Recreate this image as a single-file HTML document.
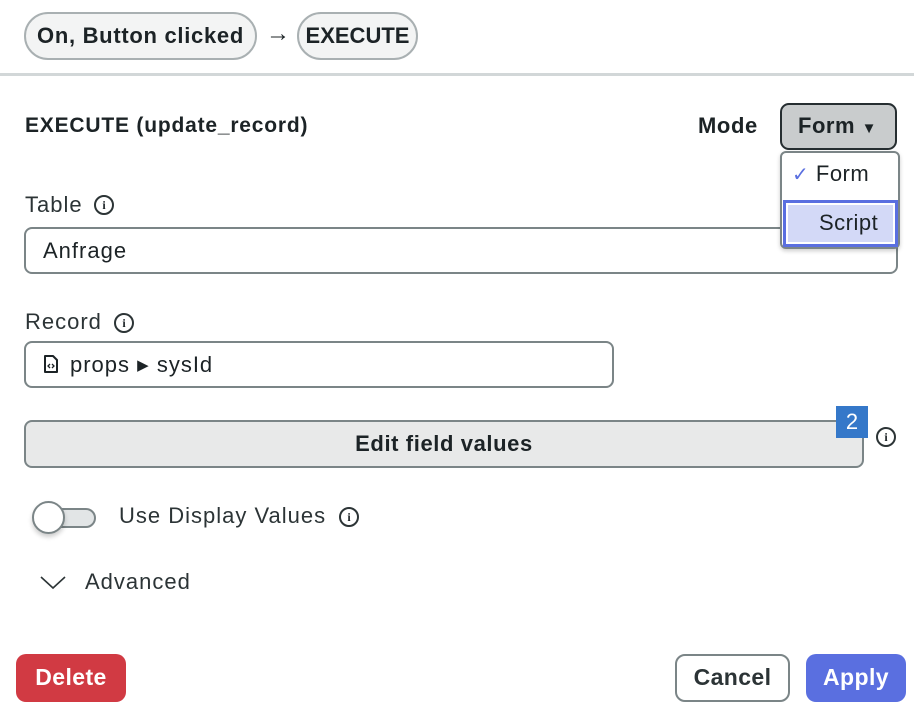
<!DOCTYPE html>
<html><head><style>
*{box-sizing:border-box;margin:0;padding:0}
body{width:914px;height:716px;background:#fff;font-family:"Liberation Sans",sans-serif;color:#1c2326;position:relative;overflow:hidden;letter-spacing:1px}
.a{position:absolute}
.pill{border:2px solid #a9b0b2;border-radius:24px;background:#f3f4f4;height:48px;top:12px;font-size:22px;font-weight:bold;line-height:44px;text-align:center;letter-spacing:0.7px}
.lbl{font-size:22px;color:#2c3436}
.inp{border:2px solid #7b8587;border-radius:8px;background:#fff}
.info{width:20px;height:20px;border:2px solid #2c3436;border-radius:50%;font-size:12px;font-weight:bold;text-align:center;line-height:16px;font-family:"Liberation Serif",serif;letter-spacing:0}
.btn{top:654px;height:48px;border-radius:10px;font-size:23px;font-weight:bold;text-align:center;line-height:46px;letter-spacing:0.4px}
</style></head><body>
<div class="a pill" style="left:24px;width:233px">On, Button clicked</div>
<div class="a" style="left:266px;top:20px;font-size:24px">→</div>
<div class="a pill" style="left:297px;width:121px;letter-spacing:0">EXECUTE</div>
<div class="a" style="left:0;top:73px;width:914px;height:3px;background:#d2d7d8"></div>

<div class="a" style="left:25px;top:114px;font-size:21px;font-weight:bold;letter-spacing:0.8px">EXECUTE (update_record)</div>
<div class="a" style="left:698px;top:113px;font-size:22px;font-weight:bold;letter-spacing:0.6px">Mode</div>
<div class="a" style="left:780px;top:103px;width:117px;height:47px;border:2px solid #262e31;border-radius:9px;background:#c9cccd;font-size:22px;font-weight:bold;line-height:42px;padding-left:16px;letter-spacing:0.5px">Form <span style="font-size:15px">▼</span></div>

<div class="a lbl" style="left:25px;top:192px">Table</div>
<div class="a info" style="left:94px;top:195px">i</div>
<div class="a inp" style="left:24px;top:227px;width:874px;height:47px;font-size:22px;line-height:43px;padding-left:17px">Anfrage</div>

<div class="a" style="left:780px;top:151px;width:120px;height:98px;border:2px solid #7b8587;border-radius:6px;background:#fff;box-shadow:0 2px 4px rgba(0,0,0,.2)">
 <div class="a" style="left:10px;top:8px;font-size:22px;letter-spacing:0.5px"><span style="color:#5a6fe0;font-size:20px">✓</span> Form</div>
 <div class="a" style="left:1px;top:47px;width:115px;height:47px;border:3px solid #5a6fe0;background:#d3d9f7;outline:2px solid #fff;outline-offset:-5px;font-size:22px;line-height:40px;padding-left:33px;letter-spacing:0.5px">Script</div>
</div>

<div class="a lbl" style="left:25px;top:309px">Record</div>
<div class="a info" style="left:114px;top:313px">i</div>
<div class="a inp" style="left:24px;top:341px;width:590px;height:47px;font-size:22px;line-height:43px;padding-left:16px">
 <svg width="18" height="20" viewBox="0 0 18 20" style="vertical-align:-2px;margin-right:10px"><path d="M3 2h8l4 4v12H3z" fill="none" stroke="#1c2326" stroke-width="2" stroke-linejoin="round"/><path d="M8 10l-2 2 2 2M10 10l2 2-2 2" fill="none" stroke="#1c2326" stroke-width="1.3"/></svg>props <span style="font-size:15px;vertical-align:2px">▶</span> sysId</div>

<div class="a" style="left:24px;top:420px;width:840px;height:48px;border:2px solid #7b8587;border-radius:8px;background:#e8e9e9;font-size:22px;font-weight:bold;text-align:center;line-height:43px;letter-spacing:0.6px">Edit field values</div>
<div class="a" style="left:836px;top:406px;width:32px;height:32px;background:#3578c9;color:#fff;font-size:22px;text-align:center;line-height:32px;letter-spacing:0">2</div>
<div class="a info" style="left:876px;top:427px">i</div>

<div class="a" style="left:33px;top:508px;width:63px;height:20px;border:2px solid #7b8587;border-radius:10px;background:#e2e5e6"></div>
<div class="a" style="left:32px;top:501px;width:33px;height:33px;border:2px solid #7b8587;border-radius:50%;background:#fff;box-shadow:0 3px 5px rgba(0,0,0,.2)"></div>
<div class="a lbl" style="left:119px;top:503px">Use Display Values</div>
<div class="a info" style="left:339px;top:507px">i</div>

<svg class="a" style="left:39px;top:574px" width="28" height="16"><path d="M2 3l12 11 12-11" fill="none" stroke="#2c3436" stroke-width="1.6"/></svg>
<div class="a lbl" style="left:85px;top:569px">Advanced</div>

<div class="a btn" style="left:16px;width:110px;background:#d13a43;color:#fff">Delete</div>
<div class="a btn" style="left:675px;width:115px;border:2px solid #7b8587;background:#fff;color:#2c3436;line-height:43px">Cancel</div>
<div class="a btn" style="left:806px;width:100px;background:#5a6fe0;color:#fff">Apply</div>
</body></html>
